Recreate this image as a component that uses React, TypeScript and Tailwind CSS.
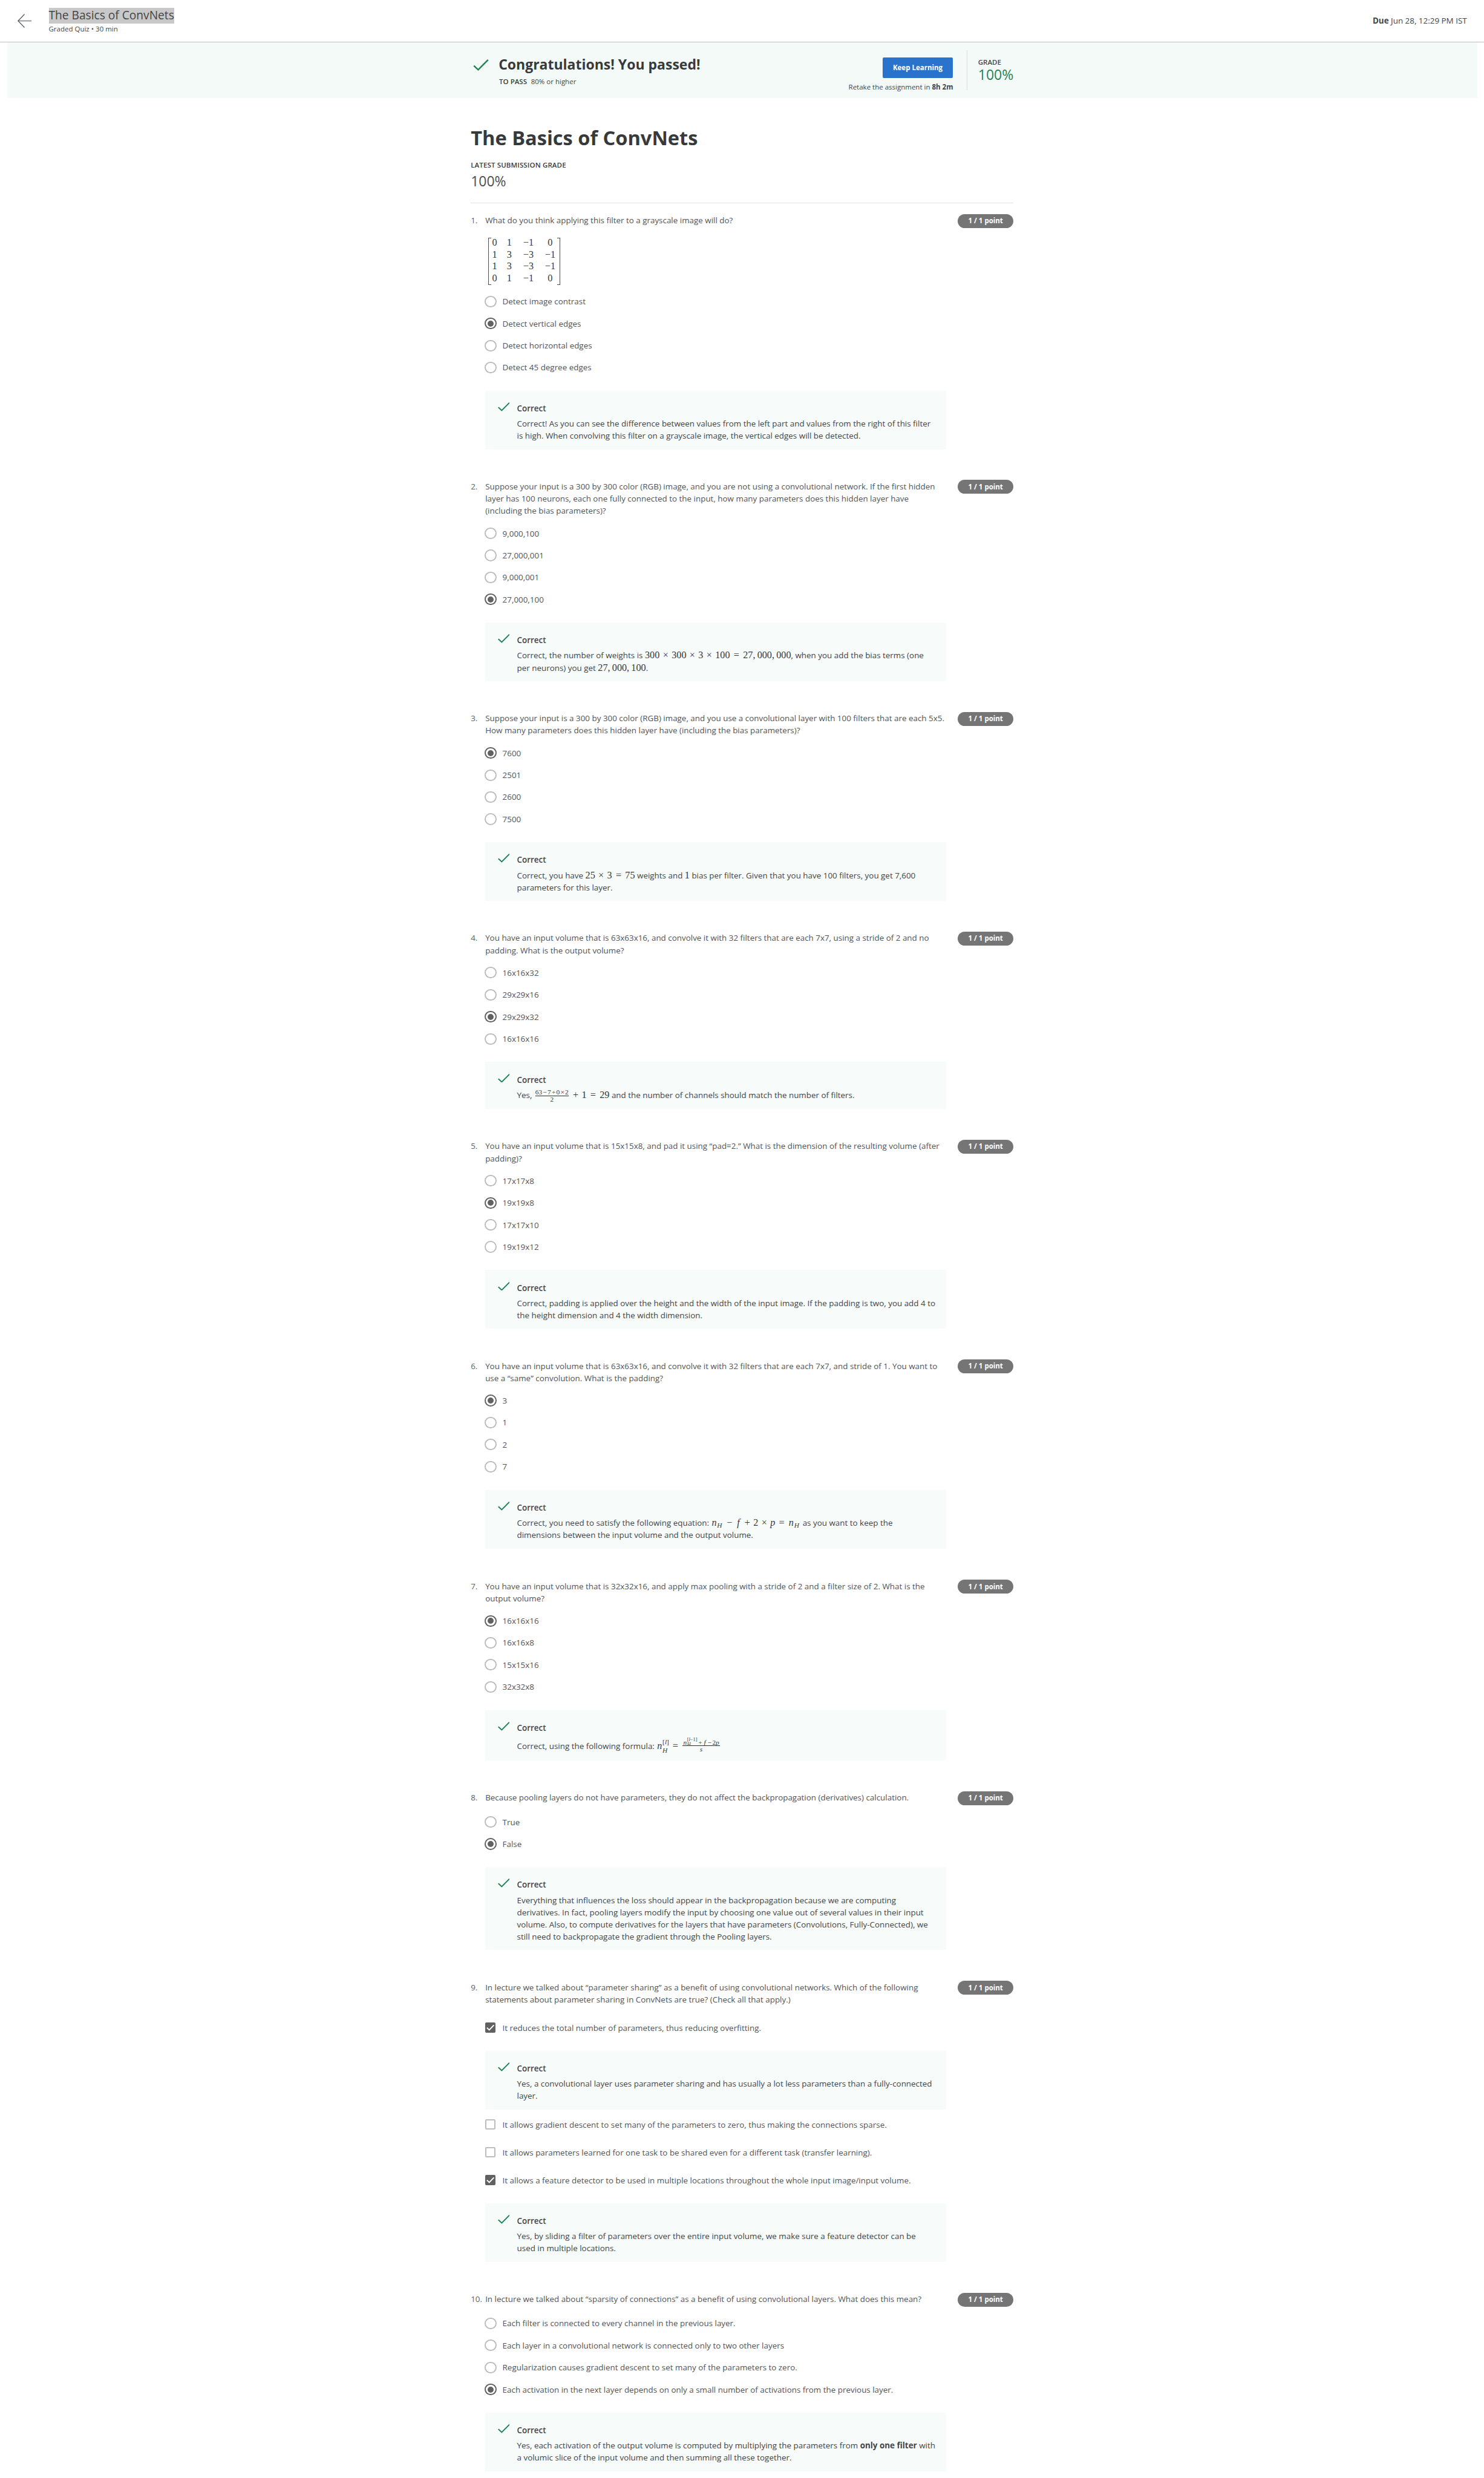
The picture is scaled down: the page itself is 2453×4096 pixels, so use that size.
import type { ReactNode } from "react";

/* ---------- math helpers ---------- */

const M = ({ children }: { children: ReactNode }) => (
  <span className="whitespace-nowrap font-['Liberation_Serif',serif] text-[16.94px] leading-[0] text-[#37393b]">{children}</span>
);
const Bin = ({ children }: { children: ReactNode }) => (
  <span className="inline-block w-[1.222em] text-center">{children}</span>
);
const Rel = ({ children }: { children: ReactNode }) => (
  <span className="inline-block w-[1.333em] text-center">{children}</span>
);
const Tight = ({ children }: { children: ReactNode }) => (
  <span className="inline-block w-[0.778em] text-center">{children}</span>
);
const Comma = () => <span className="inline-block w-[0.445em]">,</span>;
const Var = ({ children }: { children: ReactNode }) => <i className="inline-block w-[0.6em] text-center">{children}</i>;

const SubH = () => (
  <>
    <Var>n</Var>
    <i className="relative top-[3px] inline-block w-[11px] text-[11.86px]">H</i>
  </>
);

const Matrix = () => {
  const rows = [
    ["0", "1", "−1", "0"],
    ["1", "3", "−3", "−1"],
    ["1", "3", "−3", "−1"],
    ["0", "1", "−1", "0"],
  ];
  return (
    <div className="mt-[20px] ml-[5.5px] flex h-[81px] w-[123.5px] font-['Liberation_Serif',serif] text-[16.94px] text-[#37393b]">
      <div className="w-[5px] shrink-0 border-y-[1.1px] border-l-[1.1px] border-[#4a4c4e]" />
      <div className="grid flex-1 grid-cols-[11px_16px_26px_25px] content-start justify-start gap-x-[12px]">
        {rows.flatMap((r, i) =>
          r.map((c, j) => (
            <span key={`${i}-${j}`} className="h-[20.25px] text-center leading-[17px]">
              {c}
            </span>
          )),
        )}
      </div>
      <div className="w-[5px] shrink-0 border-y-[1.1px] border-r-[1.1px] border-[#4a4c4e]" />
    </div>
  );
};

/* ---------- icons ---------- */

const Tick = ({ className }: { className: string }) => (
  <svg viewBox="0 0 20.5 15.5" className={className} fill="none" stroke="#1f8354" strokeWidth="2">
    <polyline points="0.8,8.6 6.6,14 19.8,0.8" />
  </svg>
);

const Radio = ({ on }: { on?: boolean }) =>
  on ? (
    <span className="flex size-[20px] items-center justify-center rounded-full border-[2.1px] border-[#616161]">
      <span className="size-[10.5px] rounded-full bg-[#616161]" />
    </span>
  ) : (
    <span className="size-[20px] rounded-full border-[2.1px] border-[#bdbdbd]" />
  );

const Check = ({ on }: { on?: boolean }) =>
  on ? (
    <span className="flex size-[18px] items-center justify-center rounded-[2px] bg-[#616161]">
      <svg viewBox="0 0 18 18" className="size-full" fill="none" stroke="#fff" strokeWidth="2">
        <polyline points="3,9 7,13 15,4.5" />
      </svg>
    </span>
  ) : (
    <span className="size-[18px] rounded-[2px] border-[2.1px] border-[#bdbdbd]" />
  );

/* ---------- blocks ---------- */

const Lines = ({ lines }: { lines: ReactNode[] }) => (
  <>
    {lines.map((l, i) => (
      <div key={i} className="h-[21px] whitespace-nowrap">
        {l}
      </div>
    ))}
  </>
);

const Feedback = ({ height = "h-[101px]", offset = "pt-0", lines }: { height?: string; offset?: string; lines: ReactNode[] }) => (
  <div className={`${height} flex w-[795px] bg-[#f7fbfa] pl-[21.5px]`}>
    <Tick className="mt-[20px] h-[15.5px] w-[20.5px] shrink-0" />
    <div className="ml-[12.7px]">
      <div className="mt-[20px] mb-[5.2px] h-[21px] font-semibold">Correct</div>
      <div className={offset}>
        <Lines lines={lines} />
      </div>
    </div>
  </div>
);

const Question = ({ n, lines, extra, children }: { n: number; lines: string[]; extra?: ReactNode; children: ReactNode }) => (
  <section className="mb-[53px]">
    <div className="flex min-h-[24px] items-start">
      <div className="w-[25px] pt-[0.6px] text-[#5f6163]">{n}.</div>
      <div className="h-fit flex-1 pt-[0.6px] -mb-[0.6px] text-[#525456]">
        <Lines lines={lines} />
        {extra}
      </div>
      <div className="flex h-[24px] w-[96px] items-center justify-center rounded-full bg-[#757575] text-[12px] font-bold text-white">
        1 / 1 point
      </div>
    </div>
    <div className="ml-[25px]">{children}</div>
  </section>
);

const Radios = ({ options, answer }: { options: string[]; answer: number }) => (
  <div className="mt-[10px] mb-[21px] -ml-[0.8px]">
    {options.map((o, i) => (
      <div key={o} className="flex h-[38px] items-center gap-[10.5px] text-[#525456]">
        <Radio on={i === answer} />
        <span>{o}</span>
      </div>
    ))}
  </div>
);

const CheckRow = ({ on, children }: { on?: boolean; children: ReactNode }) => (
  <div className="flex h-[48px] items-center gap-[11.7px] text-[#525456]">
    <Check on={on} />
    <span>{children}</span>
  </div>
);

export default function App() {
  return (
    <div className="h-[4274px] w-[2560px] overflow-hidden bg-white font-['Open_Sans',sans-serif] text-[14px] leading-[21px] text-[#424547] [zoom:0.95835]">
      <header className="flex h-[73px] items-center border-b border-[#bdbdbd] pr-[30px] pl-[30px]">
        <svg viewBox="0 0 24 24" className="size-[24px]" fill="none" strokeWidth="1.3">
          <path d="M0.8 12 H24" stroke="#8f989e" strokeWidth="2" />
          <path d="M12 0.5 L0.8 12 L12 23.5" stroke="#4d565c" />
        </svg>
        <div className="ml-[30px] flex flex-col items-start">
          <span className="h-[27px] bg-[#c8c8c8] text-[20px] leading-[27px] whitespace-nowrap">The Basics of ConvNets</span>
          <span className="h-[18px] text-[12px] leading-[18px]">Graded Quiz • 30 min</span>
        </div>
        <div className="ml-auto">
          <b className="font-bold">Due</b> Jun 28, 12:29 PM IST
        </div>
      </header>

      <div className="mx-[12px] h-[96px] bg-[#f4faf8]">
        <div className="mx-auto flex w-[936px]">
          <Tick className="mt-[29px] ml-[4px] h-[20px] w-[27px]" />
          <div className="ml-[17px]">
            <h2 className="mt-[22px] h-[32px] text-[24px] leading-[32px] font-bold whitespace-nowrap text-[#373a3c]">
              Congratulations! You passed!
            </h2>
            <div className="mt-[4px] ml-[1px] text-[12px] leading-[18px]">
              <b className="mr-[7px] font-semibold text-[#373a3c]">TO PASS</b>80% or higher
            </div>
          </div>
          <div className="ml-auto flex flex-col items-end">
            <button className="mt-[26px] h-[36px] w-[122px] rounded-[2px] bg-[#2a73cc] text-[12px] font-bold text-white">Keep Learning</button>
            <div className="mt-[6px] text-[12px] leading-[18px]">
              Retake the assignment in <b className="font-bold">8h 2m</b>
            </div>
          </div>
          <div className="mt-[14px] ml-[24px] h-[68px] w-[1.1px] bg-[#dcdfde]" />
          <div className="ml-[18px] w-[61px]">
            <div className="mt-[25px] h-[18px] text-[12px] leading-[18px] font-semibold">GRADE</div>
            <div className="text-[24px] leading-[27px] text-[#1f8354]">100%</div>
          </div>
        </div>
      </div>

      <main className="mx-auto w-[936px]">
        <h1 className="mt-[47px] h-[44px] text-[34px] leading-[43px] font-bold text-[#373a3c]">The Basics of ConvNets</h1>
        <div className="mt-[16px] h-[18px] text-[12px] leading-[18px] font-semibold tracking-[0.14px] text-[#373a3c]">LATEST SUBMISSION GRADE</div>
        <div className="mt-[3px] h-[32px] text-[24px] leading-[31px] text-[#4d4f51]">100%</div>
        <hr className="mt-[21px] mb-[18px] border-[#e0e0e0]" />

        <Question n={1} lines={["What do you think applying this filter to a grayscale image will do?"]} extra={<Matrix />}>
          <Radios
            options={["Detect image contrast", "Detect vertical edges", "Detect horizontal edges", "Detect 45 degree edges"]}
            answer={1}
          />
          <Feedback
            lines={[
              "Correct! As you can see the difference between values from the left part and values from the right of this filter",
              "is high. When convolving this filter on a grayscale image, the vertical edges will be detected.",
            ]}
          />
        </Question>

        <Question
          n={2}
          lines={[
            "Suppose your input is a 300 by 300 color (RGB) image, and you are not using a convolutional network. If the first hidden",
            "layer has 100 neurons, each one fully connected to the input, how many parameters does this hidden layer have",
            "(including the bias parameters)?",
          ]}
        >
          <Radios options={["9,000,100", "27,000,001", "9,000,001", "27,000,100"]} answer={3} />
          <Feedback
            lines={[
              <>
                Correct, the number of weights is{" "}
                <M>
                  300<Bin>×</Bin>300<Bin>×</Bin>3<Bin>×</Bin>100<Rel>=</Rel>27<Comma />000<Comma />000
                </M>
                , when you add the bias terms (one
              </>,
              <>
                per neurons) you get{" "}
                <M>
                  27<Comma />000<Comma />100
                </M>
                .
              </>,
            ]}
          />
        </Question>

        <Question
          n={3}
          lines={[
            "Suppose your input is a 300 by 300 color (RGB) image, and you use a convolutional layer with 100 filters that are each 5x5.",
            "How many parameters does this hidden layer have (including the bias parameters)?",
          ]}
        >
          <Radios options={["7600", "2501", "2600", "7500"]} answer={0} />
          <Feedback
            lines={[
              <>
                Correct, you have{" "}
                <M>
                  25<Bin>×</Bin>3<Rel>=</Rel>75
                </M>{" "}
                weights and <M>1</M> bias per filter. Given that you have 100 filters, you get 7,600
              </>,
              "parameters for this layer.",
            ]}
          />
        </Question>

        <Question
          n={4}
          lines={[
            "You have an input volume that is 63x63x16, and convolve it with 32 filters that are each 7x7, using a stride of 2 and no",
            "padding. What is the output volume?",
          ]}
        >
          <Radios options={["16x16x32", "29x29x16", "29x29x32", "16x16x16"]} answer={2} />
          <Feedback
            height="h-[81px]"
            lines={[
              <>
                Yes,{" "}
                <M>
                  <span className="mx-[2px] inline-flex flex-col items-center align-[6px] text-[11.86px]">
                    <span className="border-b-[1.1px] border-[#2b2d2f] leading-[12px]">
                      63<Tight>−</Tight>7<Tight>+</Tight>0<Tight>×</Tight>2
                    </span>
                    <span className="leading-[11px]">2</span>
                  </span>
                  <Bin>+</Bin>1<Rel>=</Rel>29
                </M>{" "}
                and the number of channels should match the number of filters.
              </>,
            ]}
          />
        </Question>

        <Question
          n={5}
          lines={[
            "You have an input volume that is 15x15x8, and pad it using “pad=2.” What is the dimension of the resulting volume (after",
            "padding)?",
          ]}
        >
          <Radios options={["17x17x8", "19x19x8", "17x17x10", "19x19x12"]} answer={1} />
          <Feedback
            lines={[
              "Correct, padding is applied over the height and the width of the input image. If the padding is two, you add 4 to",
              "the height dimension and 4 the width dimension.",
            ]}
          />
        </Question>

        <Question
          n={6}
          lines={[
            "You have an input volume that is 63x63x16, and convolve it with 32 filters that are each 7x7, and stride of 1. You want to",
            "use a “same” convolution. What is the padding?",
          ]}
        >
          <Radios options={["3", "1", "2", "7"]} answer={0} />
          <Feedback
            height="h-[102px]"
            lines={[
              <>
                Correct, you need to satisfy the following equation:{" "}
                <M>
                  <SubH />
                  <Bin>−</Bin>
                  <Var>f</Var>
                  <Bin>+</Bin>2<Bin>×</Bin>
                  <i>p</i>
                  <Rel>=</Rel>
                  <SubH />
                </M>{" "}
                as you want to keep the
              </>,
              "dimensions between the input volume and the output volume.",
            ]}
          />
        </Question>

        <Question
          n={7}
          lines={[
            "You have an input volume that is 32x32x16, and apply max pooling with a stride of 2 and a filter size of 2. What is the",
            "output volume?",
          ]}
        >
          <Radios options={["16x16x16", "16x16x8", "15x15x16", "32x32x8"]} answer={0} />
          <Feedback
            height="h-[87px]"
            offset="pt-[2px]"
            lines={[
              <>
                Correct, using the following formula:{" "}
                <M>
                  <Var>n</Var>
                  <span className="inline-flex w-[11px] flex-col items-start align-[9px] text-[11.86px]">
                    <span className="leading-[10px]">
                      [<i>l</i>]
                    </span>
                    <i className="mt-[5px] leading-[10px]">H</i>
                  </span>
                  <Rel>=</Rel>
                  <span className="ml-[1px] inline-flex w-[64px] flex-col items-center align-[8px] text-[11.86px]">
                    <span className="w-full border-b-[1.1px] border-[#2b2d2f] text-center leading-[11px] whitespace-nowrap">
                      <Var>n</Var>
                      <span className="-mb-[4px] inline-flex w-[18px] flex-col items-start align-[6px] text-[8.8px]">
                        <span className="leading-[6px]">
                          [<i>l</i>−1]
                        </span>
                        <i className="mt-[3px] leading-[6px]">H</i>
                      </span>
                      <Tight>+</Tight>
                      <Var>f</Var>
                      <Tight>−</Tight>2<i>p</i>
                    </span>
                    <i className="leading-[12px]">s</i>
                  </span>
                </M>
              </>,
            ]}
          />
        </Question>

        <Question
          n={8}
          lines={["Because pooling layers do not have parameters, they do not affect the backpropagation (derivatives) calculation."]}
        >
          <Radios options={["True", "False"]} answer={1} />
          <Feedback
            height="h-[143px]"
            lines={[
              "Everything that influences the loss should appear in the backpropagation because we are computing",
              "derivatives. In fact, pooling layers modify the input by choosing one value out of several values in their input",
              "volume. Also, to compute derivatives for the layers that have parameters (Convolutions, Fully-Connected), we",
              "still need to backpropagate the gradient through the Pooling layers.",
            ]}
          />
        </Question>

        <Question
          n={9}
          lines={[
            "In lecture we talked about “parameter sharing” as a benefit of using convolutional networks. Which of the following",
            "statements about parameter sharing in ConvNets are true? (Check all that apply.)",
          ]}
        >
          <div className="mt-[15px]">
            <CheckRow on>It reduces the total number of parameters, thus reducing overfitting.</CheckRow>
          </div>
          <div className="mt-[16px] mb-[2px]">
            <Feedback
              lines={["Yes, a convolutional layer uses parameter sharing and has usually a lot less parameters than a fully-connected", "layer."]}
            />
          </div>
          <CheckRow>It allows gradient descent to set many of the parameters to zero, thus making the connections sparse.</CheckRow>
          <CheckRow>It allows parameters learned for one task to be shared even for a different task (transfer learning).</CheckRow>
          <CheckRow on>
            It allows a feature detector to be used in multiple locations throughout the whole input image/input volume.
          </CheckRow>
          <div className="mt-[16px]">
            <Feedback
              lines={[
                "Yes, by sliding a filter of parameters over the entire input volume, we make sure a feature detector can be",
                "used in multiple locations.",
              ]}
            />
          </div>
        </Question>

        <Question
          n={10}
          lines={["In lecture we talked about “sparsity of connections” as a benefit of using convolutional layers. What does this mean?"]}
        >
          <Radios
            options={[
              "Each filter is connected to every channel in the previous layer.",
              "Each layer in a convolutional network is connected only to two other layers",
              "Regularization causes gradient descent to set many of the parameters to zero.",
              "Each activation in the next layer depends on only a small number of activations from the previous layer.",
            ]}
            answer={3}
          />
          <Feedback
            lines={[
              <>
                Yes, each activation of the output volume is computed by multiplying the parameters from <b className="font-bold">only one filter</b> with
              </>,
              "a volumic slice of the input volume and then summing all these together.",
            ]}
          />
        </Question>
      </main>
    </div>
  );
}
